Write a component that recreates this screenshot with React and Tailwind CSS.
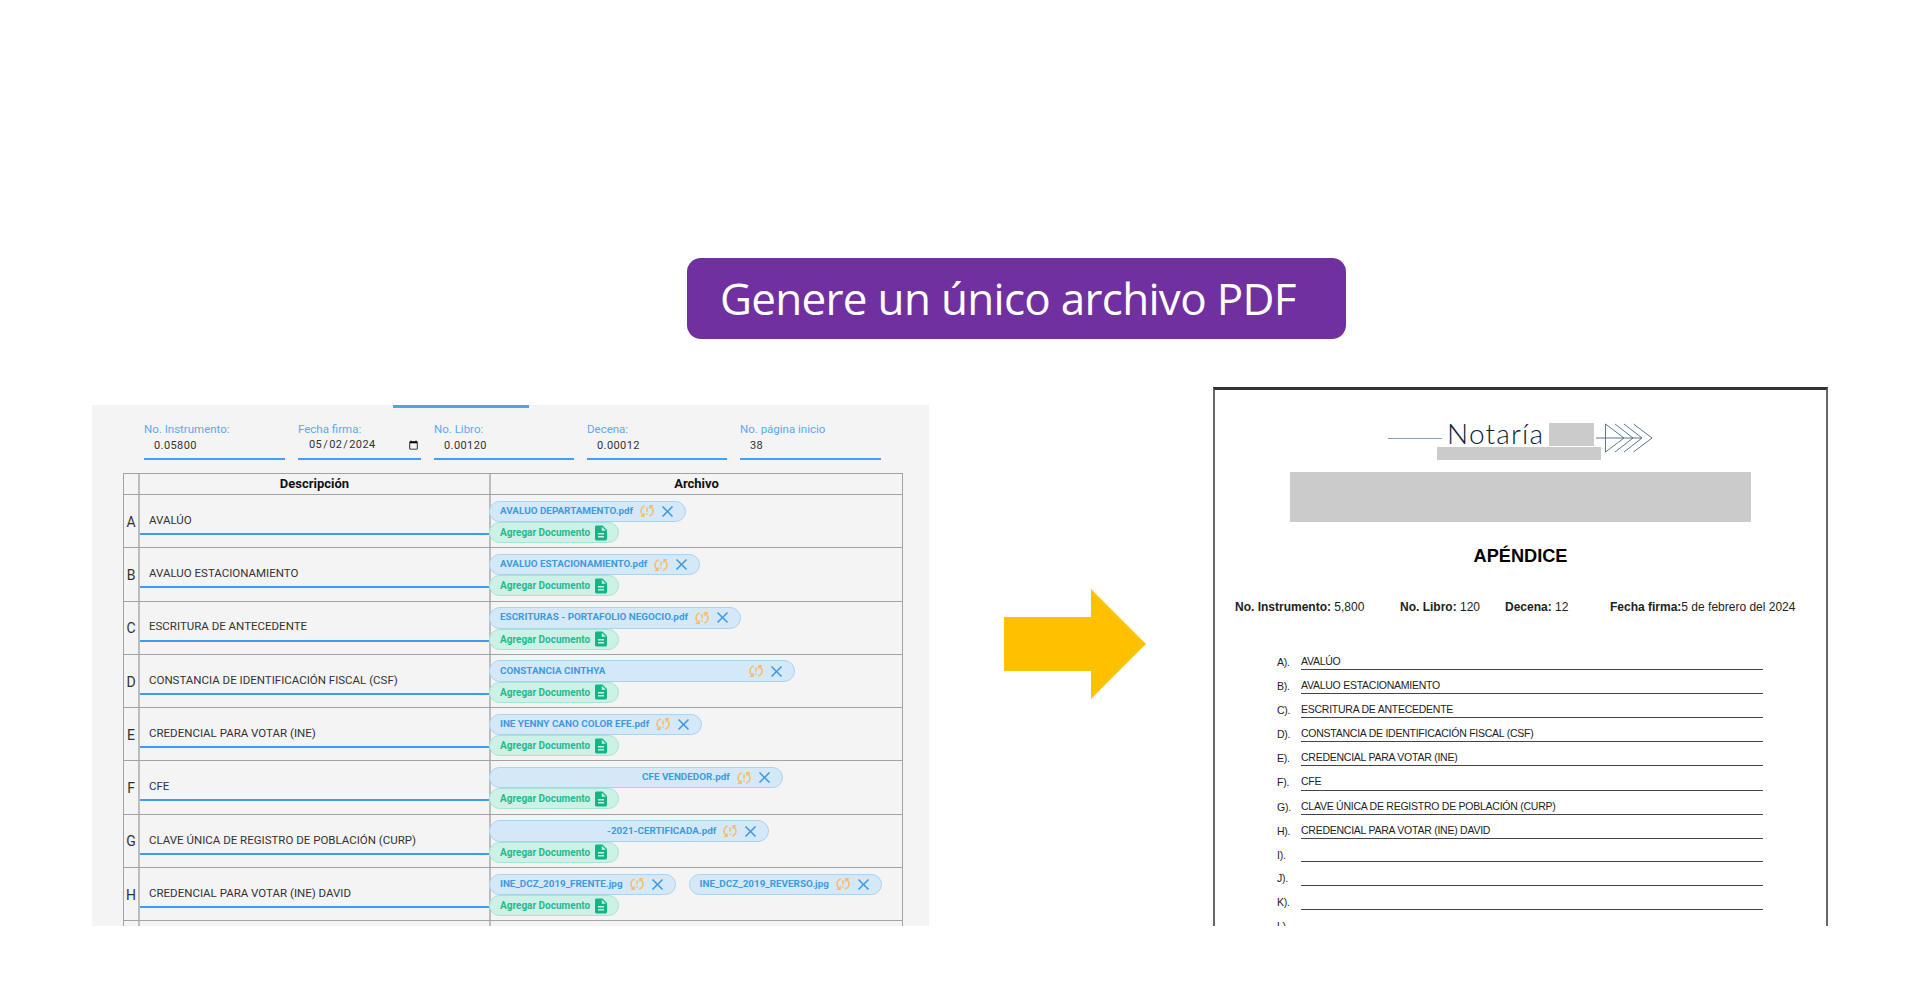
import { MdClose, MdDescription, MdSyncProblem } from "react-icons/md";

const fields = [
  { label: "No. Instrumento:", value: "0.05800", width: "w-[141px]" },
  { label: "Fecha firma:", value: "2024-05-02", width: "w-[123px]", type: "date" },
  { label: "No. Libro:", value: "0.00120", width: "w-[140px]" },
  { label: "Decena:", value: "0.00012", width: "w-[140px]" },
  { label: "No. página inicio", value: "38", width: "w-[141px]" },
];

const rows = [
  { letter: "A", text: "AVALÚO", chips: [{ name: "AVALUO DEPARTAMENTO.pdf" }] },
  { letter: "B", text: "AVALUO ESTACIONAMIENTO", chips: [{ name: "AVALUO ESTACIONAMIENTO.pdf" }] },
  { letter: "C", text: "ESCRITURA DE ANTECEDENTE", chips: [{ name: "ESCRITURAS - PORTAFOLIO NEGOCIO.pdf" }] },
  { letter: "D", text: "CONSTANCIA DE IDENTIFICACIÓN FISCAL (CSF)", chips: [{ name: "CONSTANCIA CINTHYA", name_class: "w-[242px]" }] },
  { letter: "E", text: "CREDENCIAL PARA VOTAR (INE)", chips: [{ name: "INE YENNY CANO COLOR EFE.pdf" }] },
  { letter: "F", text: "CFE", chips: [{ name: "CFE VENDEDOR.pdf", name_class: "pl-[142px]" }] },
  { letter: "G", text: "CLAVE ÚNICA DE REGISTRO DE POBLACIÓN (CURP)", chips: [{ name: "-2021-CERTIFICADA.pdf", name_class: "pl-[107px]" }] },
  { letter: "H", text: "CREDENCIAL PARA VOTAR (INE) DAVID", chips: [{ name: "INE_DCZ_2019_FRENTE.jpg" }, { name: "INE_DCZ_2019_REVERSO.jpg" }] },
];

const appendix = [
  ["A).", "AVALÚO"],
  ["B).", "AVALUO ESTACIONAMIENTO"],
  ["C).", "ESCRITURA DE ANTECEDENTE"],
  ["D).", "CONSTANCIA DE IDENTIFICACIÓN FISCAL (CSF)"],
  ["E).", "CREDENCIAL PARA VOTAR (INE)"],
  ["F).", "CFE"],
  ["G).", "CLAVE ÚNICA DE REGISTRO DE POBLACIÓN (CURP)"],
  ["H).", "CREDENCIAL PARA VOTAR (INE) DAVID"],
  ["I).", ""],
  ["J).", ""],
  ["K).", ""],
  ["L).", ""],
];

function FileChip({ name, name_class }) {
  return (
    <div className="flex h-[21.5px] items-center rounded-full border border-[#a9d3f2] bg-[#d5e8f7] pl-[10px] pr-[8px] text-[9.9px] font-bold text-[#3f9ae0]">
      <span className={`whitespace-nowrap ${name_class || ""}`}>{name}</span>
      <MdSyncProblem className="ml-[5px] text-[#f8bb68]" size={18} />
      <MdClose className="ml-[2px] text-[#3f9ae0]" size={19} />
    </div>
  );
}

function AddChip() {
  return (
    <div className="flex h-[21px] w-[130px] items-center rounded-full border border-[#a3e6d2] bg-[#cdf1e6] pl-[10px] text-[10px] font-bold text-[#1fbb8f]">
      <span className="whitespace-nowrap">Agregar Documento</span>
      <MdDescription className="ml-[2px] text-[#14b585]" size={18} />
    </div>
  );
}

function Row({ letter, text, chips }) {
  return (
    <div className="flex h-[53.3px] border-b border-[#a3a3a3]">
      <div className="flex w-[16px] items-center justify-center border-r-2 border-[#bdbdbd] pt-[2px] text-[14px] text-[#333]">
        {letter}
      </div>
      <div className="w-[349px] pt-[13px]">
        <div className="flex h-[27px] items-center border-b-2 border-[#3d9bf5] pl-[9px] text-[11.5px] text-[#333]">
          {text}
        </div>
      </div>
      <div className="flex-1 border-l-2 border-[#bdbdbd] pt-[5.5px]">
        <div className="-ml-[2px] flex gap-[13px]">
          {chips.map((chip) => (
            <FileChip key={chip.name} {...chip} />
          ))}
        </div>
        <div className="-ml-[2px] flex">
          {chips.length > 0 && <AddChip />}
        </div>
      </div>
    </div>
  );
}

function LogoArrows() {
  return (
    <svg width="56" height="30" viewBox="0 0 56 30" fill="none" stroke="#4a6a82" strokeWidth="0.9">
      <path d="M0 15H46" />
      <path d="M9.5 1L28 15L9.5 29V1Z" />
      <path d="M19 1L37 15L19 29" />
      <path d="M28 1L46 15L28 29" />
      <path d="M37.5 1L56 15L37.5 29" />
    </svg>
  );
}

export default function App() {
  return (
    <div className="h-screen overflow-hidden bg-white">
      <div className="mt-[258px] ml-[687px] flex h-[81px] w-[659px] items-center rounded-[14px] bg-[#70309f] pb-[2px] pl-[33px] font-['Open_Sans',sans-serif] text-[44px] tracking-[-0.7px] whitespace-nowrap text-white">
        Genere un único archivo PDF
      </div>

      <div className="mt-[48px] flex items-start pl-[92px]">
        {/* captura del formulario */}
        <div className="mt-[18px] h-[521px] w-[837px] overflow-hidden bg-[#f4f4f4] font-['Roboto',sans-serif]">
          <div className="ml-[301px] h-[3px] w-[136px] bg-[#4aa3f7]" />
          <div className="mt-[14px] ml-[52px] flex gap-[13px]">
            {fields.map((field) => (
              <div key={field.label} className={`${field.width} border-b-2 border-[#439ff7]`}>
                <div className="h-[14px] text-[11.5px] leading-[14px] text-[#5aa9f5]">{field.label}</div>
                <input
                  type={field.type || "text"}
                  defaultValue={field.value}
                  className="mb-[3px] block h-[19px] w-full bg-transparent pl-[10px] text-[11px] tracking-[0.4px] text-[#333] outline-none"
                />
              </div>
            ))}
          </div>
          <div className="mt-[13px] ml-[31px] w-[780px] border-x border-t border-[#a3a3a3]">
            <div className="flex h-[21px] border-b border-[#a3a3a3] text-[13px] font-bold text-[#111]">
              <div className="w-[16px] border-r-2 border-[#bdbdbd]" />
              <div className="flex w-[349px] items-center justify-center">Descripción</div>
              <div className="flex flex-1 items-center justify-center border-l-2 border-[#bdbdbd]">Archivo</div>
            </div>
            {rows.map((row) => (
              <Row key={row.letter} {...row} />
            ))}
            <Row letter="" text="" chips={[]} />
          </div>
        </div>

        <svg className="mt-[202px] ml-[75px]" width="142" height="110" viewBox="0 0 142 110">
          <path d="M0 28H87V0L142 55L87 110V82H0Z" fill="#ffc000" />
        </svg>

        {/* captura del PDF */}
        <div className="ml-[67px] h-[539px] w-[615px] overflow-hidden border-x-2 border-t-[3px] border-x-[#666] border-t-[#333] font-['Liberation_Sans',sans-serif] text-[#222]">
          <div className="mt-[33px] ml-[173px] flex h-[24px] items-start">
            <div className="mt-[15px] h-px w-[54px] bg-[#86a0b0]" />
            <div className="ml-[5px] w-[96px] font-['Lato',sans-serif] text-[28px] leading-[20px] font-light tracking-[1.2px] whitespace-nowrap text-[#062338]">
              Notaría
            </div>
            <div className="ml-[6px] h-[23px] w-[45px] bg-[#cbcbcb]" />
            <div className="ml-[2px]"><LogoArrows /></div>
          </div>
          <div className="ml-[222px] h-[13px] w-[164px] bg-[#cbcbcb]" />
          <div className="mt-[12px] ml-[75px] h-[50px] w-[461px] bg-[#cbcbcb]" />
          <div className="mt-[25px] flex h-[20px] items-center justify-center text-[18.2px] font-bold text-black">
            APÉNDICE
          </div>
          <div className="mt-[32px] ml-[20px] flex h-[16px] items-center text-[12px] whitespace-nowrap">
            <span className="w-[165px]"><b>No. Instrumento:</b> 5,800</span>
            <span className="w-[105px]"><b>No. Libro:</b> 120</span>
            <span className="w-[105px]"><b>Decena:</b> 12</span>
            <span><b>Fecha firma:</b>5 de febrero del 2024</span>
          </div>
          <div className="mt-[31px] ml-[62px] w-[486px] text-[10.5px] tracking-[-0.25px]">
            {appendix.map(([mark, text], i) => (
              <div key={mark} className={`flex ${i < 8 ? "h-[24.1px]" : "h-[23.6px]"}`}>
                <div className="w-[24px] pt-[9px]">{mark}</div>
                <div className="h-full flex-1 border-b border-[#444] pt-[9px] leading-[12px]">{text}</div>
              </div>
            ))}
          </div>
        </div>
      </div>
    </div>
  );
}
